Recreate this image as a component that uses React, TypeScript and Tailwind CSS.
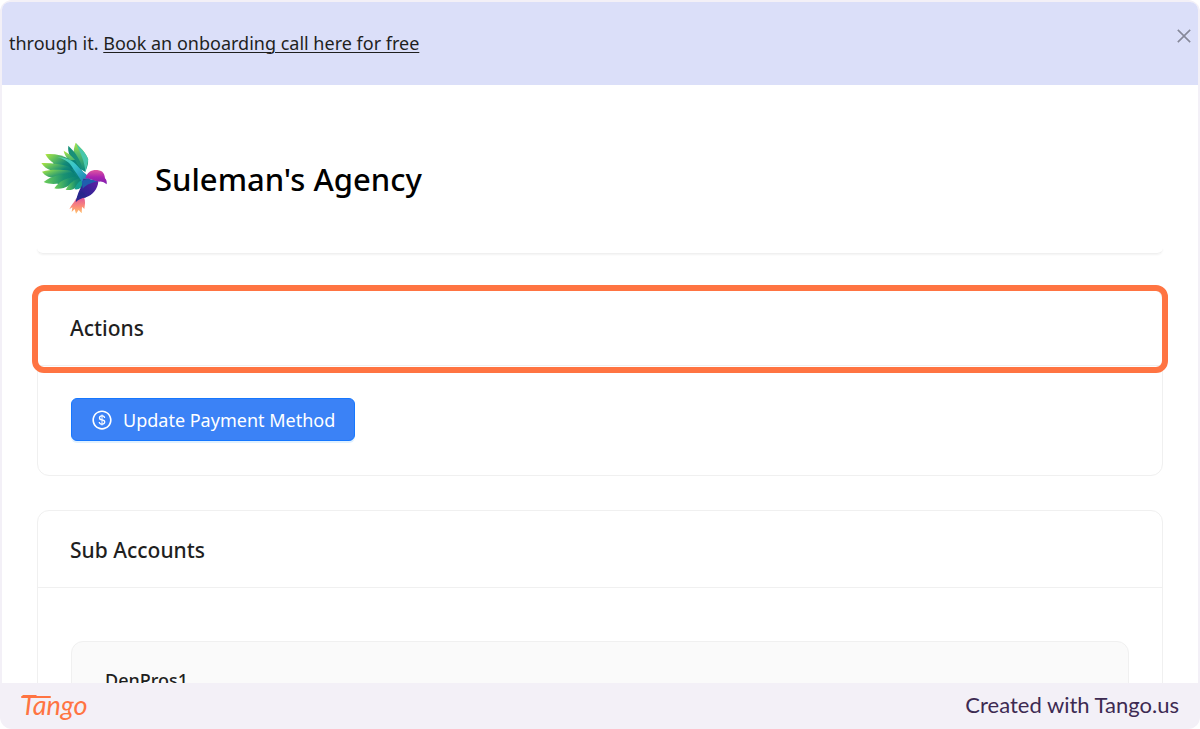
import type { ReactNode } from "react";
import { AiOutlineClose, AiOutlineDollarCircle } from "react-icons/ai";

function BirdLogo() {
  return (
    <svg
      viewBox="27 18 207 219"
      className="w-[69px] h-[73px] shrink-0"
      role="img"
      aria-label="Agency logo"
    >
      <defs>
        <linearGradient id="feather" x1="0" y1="0" x2="1" y2="0.6">
          <stop offset="0" stopColor="#b4e63e" />
          <stop offset="0.3" stopColor="#6cc65a" />
          <stop offset="0.75" stopColor="#138a78" />
          <stop offset="1" stopColor="#067a78" />
        </linearGradient>
        <linearGradient id="feather-top" x1="0" y1="0" x2="0" y2="1">
          <stop offset="0" stopColor="#b4e63e" />
          <stop offset="0.35" stopColor="#5cc06a" />
          <stop offset="1" stopColor="#078580" />
        </linearGradient>
        <linearGradient id="feather-low" x1="0" y1="0" x2="1" y2="0">
          <stop offset="0" stopColor="#6fcf58" />
          <stop offset="0.6" stopColor="#1a9270" />
          <stop offset="1" stopColor="#057d78" />
        </linearGradient>
        <linearGradient id="wing" x1="0" y1="0" x2="1" y2="1">
          <stop offset="0" stopColor="#5fd3a5" />
          <stop offset="0.4" stopColor="#38c6cc" />
          <stop offset="1" stopColor="#1767a8" />
        </linearGradient>
        <linearGradient id="body" x1="1" y1="0" x2="0" y2="1">
          <stop offset="0" stopColor="#6a1fa6" />
          <stop offset="0.45" stopColor="#3a2399" />
          <stop offset="1" stopColor="#1c2a86" />
        </linearGradient>
        <linearGradient id="head" x1="0" y1="0" x2="0" y2="1">
          <stop offset="0" stopColor="#e0569f" />
          <stop offset="0.5" stopColor="#a923b0" />
          <stop offset="1" stopColor="#7d1fae" />
        </linearGradient>
        <linearGradient id="tail" x1="0" y1="0" x2="0" y2="1">
          <stop offset="0" stopColor="#e0559b" />
          <stop offset="0.55" stopColor="#fb8a79" />
          <stop offset="1" stopColor="#ffc46b" />
        </linearGradient>
      </defs>
      <path d="M137 20C150 34 168 48 174 70C176 86 170 96 166 108L140 92C128 66 128 44 137 20Z" fill="url(#feather-top)" />
      <path d="M115 29C130 44 148 62 158 100L138 88C122 70 112 50 115 29Z" fill="#189078" />
      <path d="M101 44C120 54 140 72 156 104L132 84C114 72 104 60 101 44Z" fill="url(#feather-top)" />
      <path d="M137 20C150 36 168 50 175 70L166 110C166 78 150 48 137 20Z" fill="#48c7ac" />
      <path d="M72 76L136 72L166 120L148 134L84 144L62 116Z" fill="#0d857b" />
      <path d="M46 55C72 52 96 58 116 68L136 98L116 100C84 92 58 78 46 55Z" fill="url(#feather)" />
      <path d="M34 81C62 80 92 84 118 92L134 112L106 110C76 108 48 104 34 81Z" fill="url(#feather)" />
      <path d="M36 107C66 98 96 102 122 104L138 118L108 122C82 130 50 128 36 107Z" fill="url(#feather)" />
      <path d="M41 138C66 118 96 114 132 112L142 124C108 138 74 152 41 138Z" fill="url(#feather-low)" />
      <path d="M73 157C88 134 110 126 144 120L148 130C122 146 100 164 73 157Z" fill="url(#feather-low)" />
      <path d="M107 161C118 142 132 130 154 126L156 138C140 154 128 166 107 161Z" fill="url(#feather-low)" />
      <path d="M134 160C138 144 148 134 164 128L164 142C156 154 148 162 134 160Z" fill="#16a08f" />
      <path d="M82 64C112 62 134 78 148 96C160 110 172 114 182 132L160 150C154 128 138 112 126 92C116 76 100 68 82 64Z" fill="url(#wing)" />
      <path d="M160 128C178 130 192 132 205 136C204 158 188 178 168 184C154 188 144 194 138 200C140 178 148 162 156 148Z" fill="url(#body)" />
      <path d="M156 136C168 126 186 130 204 136C186 140 172 144 158 158Z" fill="#1f5fae" />
      <path d="M166 128C171 108 184 101 202 102C220 104 224 115 225 127C230 131 231 138 230 145C224 140 216 136 208 137C192 136 182 126 166 128Z" fill="url(#head)" />
      <path d="M138 188C146 190 154 186 162 184C167 196 165 206 163 219L156 212L155 232L146 222L138 233L134 219L125 228L127 214L118 220C124 206 132 200 138 188Z" fill="url(#tail)" />
      <path d="M137 199C138 186 146 174 154 166C164 172 168 180 168 184C154 186 144 192 137 199Z" fill="#29278d" />
    </svg>
  );
}

type CardProps = {
  title: string;
  highlighted?: boolean;
  children: ReactNode;
};

function Card({ title, highlighted, children }: CardProps) {
  return (
    <section className="bg-white border border-[#f0f0f0] rounded-xl">
      <div className="relative h-[77px] flex items-center px-8 pt-0.5 border-b border-[#f0f0f0]">
        <h2 className="text-[21px] leading-8 font-medium text-[#1f1f1f]">
          {title}
        </h2>
        {highlighted && (
          <div className="absolute -inset-x-1.5 -top-1 -bottom-2 border-6 border-[#ff7442] rounded-xl pointer-events-none" />
        )}
      </div>
      {children}
    </section>
  );
}

function App() {
  return (
    <div className="h-screen flex flex-col overflow-hidden rounded-xl bg-[#f3f0f7] font-['Noto_Sans','Open_Sans',sans-serif]">
      <div className="flex-1 min-h-0 flex flex-col mt-0.5 mx-0.5 overflow-hidden rounded-t-lg bg-white">
        <div className="relative h-[83px] shrink-0 flex items-center px-[7px] pb-0.5 bg-[#dbdff9]">
          <p className="text-[18px] leading-7 text-[#1f1f1f]">
            through it.{" "}
            <a href="#onboarding" className="underline underline-offset-2 decoration-1">
              Book an onboarding call here for free
            </a>
          </p>
          <button
            type="button"
            aria-label="Close"
            className="absolute top-6 right-1 text-[#868899]"
          >
            <AiOutlineClose size={20} />
          </button>
        </div>

        <header className="h-[163px] shrink-0 flex items-center gap-[47px] px-[37px] pt-6">
          <BirdLogo />
          <h1 className="text-[31px] leading-10 font-medium text-black">
            Suleman's Agency
          </h1>
        </header>

        <main className="px-[35px]">
          <div className="h-1.5 mb-[34px] rounded-b-xl border-b border-[#f0f0f0] shadow-[0_1px_2px_rgba(0,0,0,0.05)]" />

          <div className="flex flex-col gap-[34px]">
            <Card title="Actions" highlighted>
              <div className="px-[33px] pt-8 pb-[34px]">
                <button
                  type="button"
                  className="h-[43px] flex items-center gap-2.5 px-[19px] rounded-md border border-[#1677ff] bg-[#3b82f6] text-white text-[18px] leading-7 shadow-[0_2px_0_#e0f1ff]"
                >
                  <AiOutlineDollarCircle size={22} />
                  Update Payment Method
                </button>
              </div>
            </Card>

            <Card title="Sub Accounts">
              <div className="px-[33px] pt-[53px] pb-8">
                <div className="border border-[#f0f0f0] rounded-xl bg-[#fafafa] px-[33px] py-6">
                  <h3 className="text-[18px] leading-7 font-medium text-[#1f1f1f]">
                    DenPros1
                  </h3>
                </div>
              </div>
            </Card>
          </div>
        </main>
      </div>

      <footer className="h-[46px] shrink-0 flex items-center justify-between px-[21px] pb-0.5">
        <a
          href="#tango"
          className="relative font-['Lato',sans-serif] italic text-[27px] leading-8 text-[#ff7442]"
        >
          Tango
          <svg
            viewBox="0 0 30 2"
            className="absolute left-0 top-[7px] w-[30px] h-0.5"
            aria-hidden="true"
          >
            <path d="M1 1H29" stroke="currentColor" strokeWidth="2" strokeLinecap="round" />
          </svg>
        </a>
        <p className="font-['Lato',sans-serif] text-[22px] leading-7 text-[#3d2a52]">
          Created with Tango.us
        </p>
      </footer>
    </div>
  );
}

export default App;
